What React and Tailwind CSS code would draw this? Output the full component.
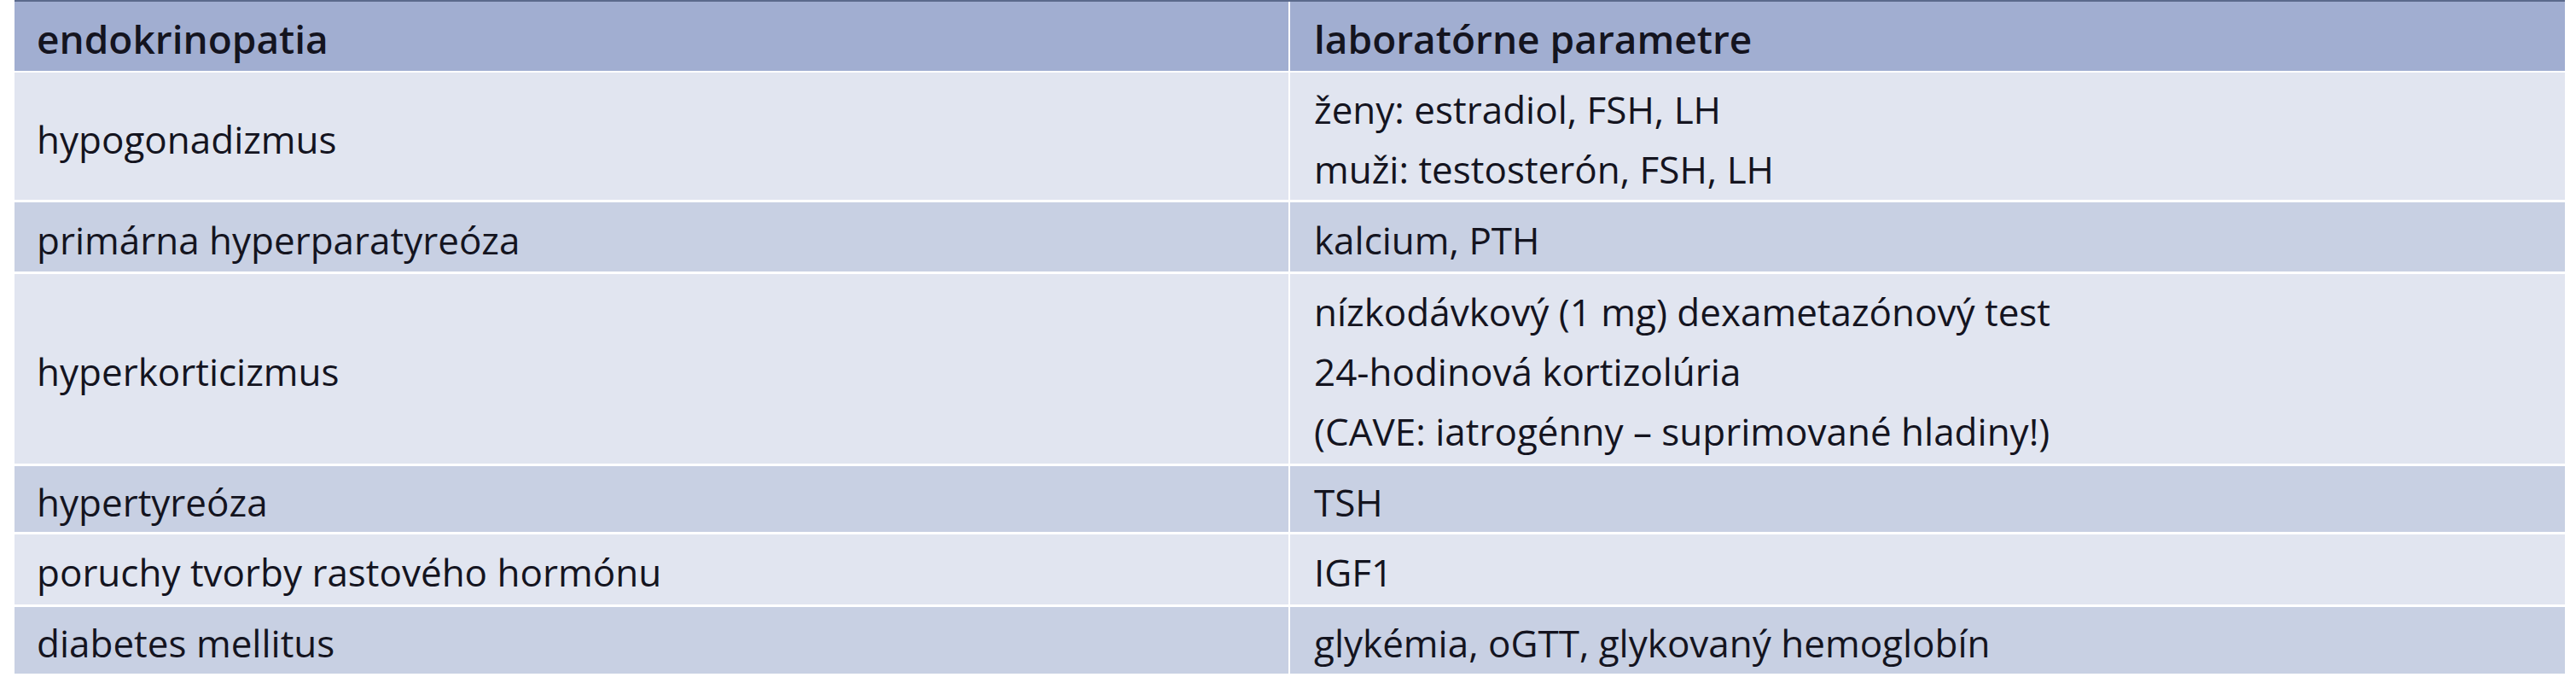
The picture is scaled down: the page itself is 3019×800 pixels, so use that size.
import React from 'react';

const rows = [
  { left: 'hypogonadizmus', right: ['ženy: estradiol, FSH, LH', 'muži: testosterón, FSH, LH'], h: 'h-[149px]', shade: 'light' },
  { left: 'primárna hyperparatyreóza', right: ['kalcium, PTH'], h: 'h-[81px]', shade: 'dark' },
  {
    left: 'hyperkorticizmus',
    right: [
      'nízkodávkový (1 mg) dexametazónový test',
      '24-hodinová kortizolúria',
      '(CAVE: iatrogénny – suprimované hladiny!)',
    ],
    h: 'h-[222px]',
    shade: 'light',
  },
  { left: 'hypertyreóza', right: ['TSH'], h: 'h-[77px]', shade: 'dark' },
  { left: 'poruchy tvorby rastového hormónu', right: ['IGF1'], h: 'h-[82px]', shade: 'light' },
  { left: 'diabetes mellitus', right: ['glykémia, oGTT, glykovaný hemoglobín'], h: 'h-[78px]', shade: 'dark' },
];

export default function App() {
  return (
    <div
      className="w-full h-[800px] bg-white pl-[17px] pr-[13px] text-[#14141f]"
      style={{ fontFamily: '"Open Sans", "Noto Sans", sans-serif' }}
    >
      <div className="flex flex-col">
        {/* header */}
        <div className="border-t-2 border-[#5b6a8c] grid grid-cols-[1493px_1fr] gap-x-[2px] h-[83px] mb-[2px]">
          <div className="bg-[#a1aed1] flex items-center pl-[26px] pt-[4px] text-[46px] font-semibold leading-[70px]">
            endokrinopatia
          </div>
          <div className="bg-[#a1aed1] flex items-center pl-[28px] pt-[4px] text-[46px] font-semibold leading-[70px]">
            laboratórne parametre
          </div>
        </div>

        <div className="flex flex-col gap-y-[3px]">
          {rows.map((r) => {
            const bg = r.shade === 'light' ? 'bg-[#e1e5f0]' : 'bg-[#c8d0e3]';
            return (
              <div key={r.left} className={`grid grid-cols-[1493px_1fr] gap-x-[2px] ${r.h}`}>
                <div className={`${bg} flex items-center pl-[26px] pt-[6px] text-[44px] leading-[70px]`}>
                  {r.left}
                </div>
                <div className={`${bg} flex flex-col justify-center pl-[28px] pt-[6px] text-[44px] leading-[70px]`}>
                  {r.right.map((line) => (
                    <div key={line}>{line}</div>
                  ))}
                </div>
              </div>
            );
          })}
        </div>
      </div>
    </div>
  );
}
